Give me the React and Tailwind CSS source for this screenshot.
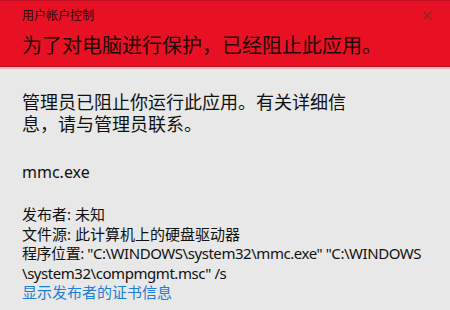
export default function App() {
  const f = { fontFamily: '"Noto Sans", "Noto Sans CJK SC", sans-serif' };
  return (
    <div className="w-[450px] h-[310px] bg-[#e8e8e8] overflow-hidden" style={f}>
      <div className="h-[67px] bg-[#e81123] border-t border-[#c40f22] border-b border-b-[#b80e1f] relative px-[22px]">
        <div className="pt-[7px] text-[12px] leading-[16px] text-[#2a0a0c]">用户帐户控制</div>
        <div className="mt-[10px] text-[20px] leading-[24px] text-[#1e0608]">为了对电脑进行保护，已经阻止此应用。</div>
        <svg className="absolute right-[18px] top-[10px]" width="9" height="9" viewBox="0 0 9 9">
          <path d="M0.5 0.5L8.5 8.5M8.5 0.5L0.5 8.5" stroke="#8a1018" strokeWidth="1" />
        </svg>
      </div>
      <div className="h-[2px] bg-[#f0b4ba]" />
      <div className="px-[22px] text-[#111]">
        <div className="mt-[22px] text-[18px] leading-[22px]">
          管理员已阻止你运行此应用。有关详细信<br />息，请与管理员联系。
        </div>
        <div className="mt-[26px] text-[16px] leading-[22px]">mmc.exe</div>
        <div className="mt-[22px] text-[15px] leading-[19.5px] whitespace-nowrap">
          <div>发布者: 未知</div>
          <div>文件源: 此计算机上的硬盘驱动器</div>
          <div className="tracking-[-0.45px]">程序位置: "C:\WINDOWS\system32\mmc.exe" "C:\WINDOWS</div>
          <div className="tracking-[-0.45px]">\system32\compmgmt.msc" /s</div>
          <div className="text-[#1c7fd1]">显示发布者的证书信息</div>
        </div>
      </div>
    </div>
  );
}
